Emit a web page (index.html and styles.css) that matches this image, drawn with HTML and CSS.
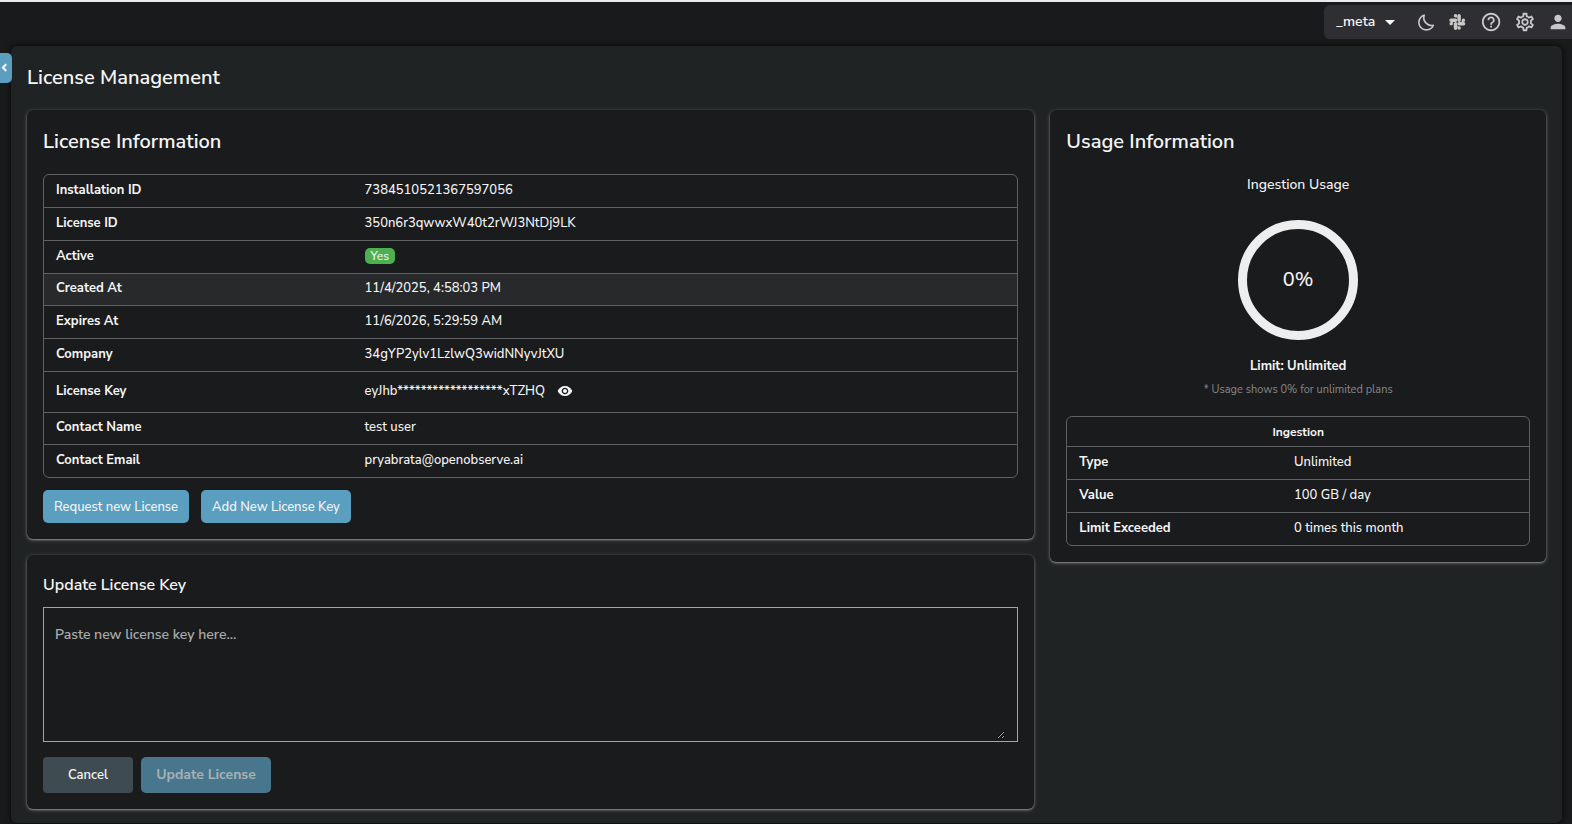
FILE: index.html
```
<!DOCTYPE html>
<html lang="en">
<head>
  <meta charset="UTF-8" />
  <meta name="viewport" content="width=device-width, initial-scale=1.0"/>
  <title>License Management</title>
  <link rel="stylesheet" href="styles.css">
</head>
<body>

  <header class="topbar">
    <div class="toolbar">
      <div class="org-select">
        <select aria-label="Organization">
          <option>_meta</option>
        </select>
      </div>
      <button class="icon-btn" aria-label="Toggle dark mode">
        <svg viewBox="0 0 24 24"><path d="M10 4.600a8.600 8.600 0 0 0 10 11A8.200 8.200 0 1 1 10 4.600z" fill="none" stroke="currentColor" stroke-width="1.8" stroke-linejoin="round"/></svg>
      </button>
      <button class="icon-btn" aria-label="Slack">
        <svg viewBox="2 0 24 24"><g fill="currentColor"><path d="M7.4 13.900a1.900 1.900 0 1 1-1.900-1.900h1.900zM8.300 13.900a1.900 1.900 0 0 1 3.800 0v4.900a1.900 1.900 0 1 1-3.800 0z"/><path d="M10.200 7.200a1.900 1.900 0 1 1 1.900-1.900v1.900zM10.200 8.100a1.900 1.900 0 0 1 0 3.800H5.300a1.900 1.900 0 1 1 0-3.800z"/><path d="M16.900 10a1.900 1.900 0 1 1 1.900 1.900h-1.900zM16 10a1.900 1.900 0 0 1-3.800 0V5.200a1.900 1.900 0 1 1 3.800 0z"/><path d="M14.100 16.700a1.900 1.900 0 1 1-1.900 1.900v-1.900zM14.100 15.800a1.900 1.900 0 0 1 0-3.800H19a1.900 1.900 0 1 1 0 3.800z"/></g></svg>
      </button>
      <button class="icon-btn" aria-label="Help">
        <svg viewBox="1 0 24 24"><path fill="currentColor" d="M11 18h2v-2h-2v2zm1-16C6.480 2 2 6.480 2 12s4.480 10 10 10 10-4.480 10-10S17.520 2 12 2zm0 18c-4.410 0-8-3.590-8-8s3.590-8 8-8 8 3.590 8 8-3.590 8-8 8zm0-14c-2.210 0-4 1.790-4 4h2c0-1.100.9-2 2-2s2 .9 2 2c0 2-3 1.750-3 5h2c0-2.250 3-2.500 3-5 0-2.210-1.790-4-4-4z"/></svg>
      </button>
      <button class="icon-btn" aria-label="Settings">
        <svg viewBox="0 0 24 24"><path fill="currentColor" d="M19.430 12.980c.04-.32.070-.64.070-.98s-.03-.66-.07-.98l2.110-1.650c.19-.15.240-.42.120-.64l-2-3.460c-.09-.16-.26-.25-.44-.25-.06 0-.12.010-.17.030l-2.490 1c-.52-.4-1.080-.73-1.690-.98l-.38-2.650C14.460 2.180 14.250 2 14 2h-4c-.25 0-.46.180-.49.420l-.38 2.650c-.61.250-1.170.590-1.690.980l-2.490-1c-.06-.02-.12-.03-.18-.03-.17 0-.34.090-.43.250l-2 3.460c-.13.220-.07.490.120.640l2.110 1.650c-.04.320-.07.650-.07.980s.03.660.070.980l-2.110 1.650c-.19.150-.24.420-.12.640l2 3.460c.09.160.260.250.440.250.06 0 .12-.01.170-.03l2.490-1c.52.400 1.080.730 1.690.980l.38 2.650c.03.240.240.420.490.420h4c.25 0 .46-.18.490-.42l.38-2.650c.61-.25 1.170-.59 1.690-.98l2.490 1c.06.020.120.030.180.030.17 0 .34-.09.430-.25l2-3.460c.12-.22.070-.49-.12-.64l-2.110-1.650zm-1.980-1.710c.04.310.050.520.050.730s-.02.430-.05.730l-.14 1.130.89.700 1.080.840-.7 1.210-1.270-.51-1.040-.42-.9.680c-.43.320-.84.560-1.250.730l-1.060.43-.16 1.130-.2 1.350h-1.400l-.19-1.350-.16-1.130-1.060-.43c-.43-.18-.83-.41-1.230-.71l-.91-.7-1.060.43-1.270.51-.7-1.210 1.080-.84.890-.7-.14-1.130c-.03-.31-.05-.54-.05-.74s.02-.43.050-.73l.14-1.130-.89-.7-1.080-.84.700-1.210 1.270.51 1.040.42.900-.68c.43-.32.840-.56 1.250-.73l1.060-.43.160-1.130.2-1.350h1.390l.19 1.350.16 1.130 1.060.43c.43.180.83.410 1.230.710l.91.700 1.060-.43 1.270-.51.700 1.210-1.070.85-.89.700.14 1.130zM12 8c-2.210 0-4 1.790-4 4s1.790 4 4 4 4-1.790 4-4-1.790-4-4-4zm0 6c-1.100 0-2-.9-2-2s.9-2 2-2 2 .9 2 2-.9 2-2 2z"/></svg>
      </button>
      <button class="icon-btn" aria-label="Profile">
        <svg viewBox="0 0 24 24"><path fill="currentColor" d="M12 12c2.210 0 4-1.790 4-4s-1.790-4-4-4-4 1.790-4 4 1.790 4 4 4zm0 2c-2.670 0-8 1.340-8 4v2h16v-2c0-2.660-5.330-4-8-4z"/></svg>
      </button>
    </div>
  </header>

  <button class="collapse-btn" aria-label="Collapse menu">
    <svg viewBox="0 0 24 24"><path d="M15 3l-8 8 8 8" fill="none" stroke="currentColor" stroke-width="5"/></svg>
  </button>

  <main class="page">
    <h1>License Management</h1>

    <div class="columns">
      <div class="column">
        <section class="card">
          <h2>License Information</h2>
          <table class="info-table license-table">
            <colgroup><col class="label-col"><col></colgroup>
            <tbody>
              <tr><th scope="row">Installation ID</th><td>7384510521367597056</td></tr>
              <tr><th scope="row">License ID</th><td>350n6r3qwwxW40t2rWJ3NtDj9LK</td></tr>
              <tr><th scope="row">Active</th><td><span class="badge">Yes</span></td></tr>
              <tr class="compact hovered"><th scope="row">Created At</th><td>11/4/2025, 4:58:03 PM</td></tr>
              <tr><th scope="row">Expires At</th><td>11/6/2026, 5:29:59 AM</td></tr>
              <tr><th scope="row">Company</th><td>34gYP2ylv1LzlwQ3widNNyvJtXU</td></tr>
              <tr class="key-row">
                <th scope="row">License Key</th>
                <td>
                  <div class="key">
                    <span>eyJhb******************xTZHQ</span>
                    <button class="eye-btn" aria-label="Show license key">
                      <svg viewBox="0 0 24 24"><path fill="currentColor" d="M12 4.500C7 4.500 2.730 7.610 1 12c1.730 4.390 6 7.500 11 7.500s9.270-3.110 11-7.500c-1.730-4.390-6-7.500-11-7.500zM12 17c-2.760 0-5-2.240-5-5s2.240-5 5-5 5 2.240 5 5-2.240 5-5 5zm0-8c-1.660 0-3 1.340-3 3s1.340 3 3 3 3-1.340 3-3-1.340-3-3-3z"/></svg>
                    </button>
                  </div>
                </td>
              </tr>
              <tr class="compact"><th scope="row">Contact Name</th><td>test user</td></tr>
              <tr class="compact"><th scope="row">Contact Email</th><td>pryabrata@openobserve.ai</td></tr>
            </tbody>
          </table>
          <div class="actions">
            <button class="btn">Request new License</button>
            <button class="btn">Add New License Key</button>
          </div>
        </section>

        <section class="card update-card">
          <label for="licenseKey">Update License Key</label>
          <div class="key-field">
            <textarea id="licenseKey" placeholder="Paste new license key here..."></textarea>
          </div>
          <div class="form-actions">
            <button class="btn btn-cancel">Cancel</button>
            <button class="btn btn-update" disabled>Update License</button>
          </div>
        </section>
      </div>

      <div class="column">
        <section class="card">
          <h2>Usage Information</h2>
          <div class="usage">
            <h3>Ingestion Usage</h3>
            <div class="ring">0%</div>
            <p class="limit">Limit: Unlimited</p>
            <p class="note">* Usage shows 0% for unlimited plans</p>
          </div>
          <table class="info-table usage-table">
            <colgroup><col class="label-col"><col></colgroup>
            <thead>
              <tr><th colspan="2">Ingestion</th></tr>
            </thead>
            <tbody>
              <tr><th scope="row">Type</th><td>Unlimited</td></tr>
              <tr><th scope="row">Value</th><td>100 GB / day</td></tr>
              <tr class="compact"><th scope="row">Limit Exceeded</th><td>0 times this month</td></tr>
            </tbody>
          </table>
        </section>
      </div>
    </div>
  </main>

</body>
</html>
```

FILE: styles.css
```
:root {
  --bg: #181a1b;
  --panel: #1f2324;
  --card: #1a1b1d;
  --toolbar: #2f2f33;
  --line: #5f6061;
  --text: #f5f5f5;
  --icon: #c8c8c9;
  --primary: #5a9fbf;
  --green: #4caf50;
}
* { box-sizing: border-box; }
body {
  margin: 0;
  min-height: 100vh;
  display: flex;
  flex-direction: column;
  border-top: 2px solid #e8eaec;
  background: var(--bg);
  color: var(--text);
  font-family: 'Nunito Sans', 'Open Sans', sans-serif;
  font-size: 13px;
  font-weight: 500;
  line-height: 20px;
}
h1, h2, h3, p { margin: 0; }
button, select, textarea {
  font: inherit;
  color: inherit;
}
button {
  padding: 0;
  border: none;
  background: none;
  cursor: pointer;
}
svg { display: block; }

.topbar {
  display: flex;
  justify-content: flex-end;
  padding: 3px 0 7px;
}
.toolbar {
  display: flex;
  align-items: center;
  gap: 11px;
  height: 34px;
  padding: 0 3px 0 12px;
  border-radius: 6px 0 0 6px;
  background: var(--toolbar);
}
.org-select {
  position: relative;
  width: 68px;
}
.org-select::after {
  content: "";
  position: absolute;
  top: 8px;
  right: 9px;
  border: 5px solid transparent;
  border-top-color: #fff;
  border-bottom: none;
  pointer-events: none;
}
.org-select select {
  display: block;
  width: 100%;
  padding: 0;
  border: none;
  background: transparent;
  appearance: none;
  font-size: 14px;
  font-weight: 600;
}
.icon-btn {
  width: 22px;
  height: 22px;
  color: var(--icon);
}

.collapse-btn {
  position: absolute;
  top: 53px;
  left: 0;
  display: flex;
  align-items: center;
  width: 12px;
  height: 30px;
  border-radius: 0 5px 5px 0;
  background: var(--primary);
}
.collapse-btn svg { width: 10px; }

.page {
  flex: 1;
  margin: 0 10px 1px 11px;
  padding: 16px 8px 14px;
  border-radius: 6px;
  background: var(--panel);
  box-shadow: 0 0 5px 1px rgba(0,0,0,0.6);
}
h1, h2 {
  font-size: 20px;
  line-height: 32px;
  font-weight: 600;
}
h1 { padding: 0 8px; }
.columns {
  display: grid;
  grid-template-columns: 2fr 1fr;
  align-items: start;
  margin-top: 16px;
}
.column {
  display: flex;
  flex-direction: column;
  gap: 16px;
  padding: 0 8px;
}
.card {
  padding: 16px;
  border-radius: 6px;
  background: var(--card);
  box-shadow: 0 1px 5px rgba(255,255,255,0.2), 0 1px 2px rgba(255,255,255,0.4);
}

.info-table {
  width: 100%;
  margin-top: 16px;
  border: 1px solid var(--line);
  border-radius: 6px;
  border-spacing: 0;
  table-layout: fixed;
  overflow: hidden;
}
.info-table th,
.info-table td {
  height: 33px;
  padding: 0 12px 3px;
  border-bottom: 1px solid var(--line);
  text-align: left;
}
.info-table th { font-weight: 700; }
.info-table .compact > * { height: 32px; }
.info-table tbody tr:last-child > * { border-bottom: none; }
.info-table .hovered { background: #28292b; }
.info-table .key-row > * { height: 41px; }
.license-table .label-col { width: 31.7%; }
.usage-table .label-col { width: 46.5%; }
.usage-table thead th {
  height: 30px;
  padding-bottom: 0;
  text-align: center;
  font-size: 12px;
}
.badge {
  display: inline-block;
  padding: 0 6px;
  border-radius: 5px;
  background: var(--green);
  font-size: 12px;
  line-height: 16px;
}
.key {
  display: flex;
  align-items: center;
  gap: 12px;
}
.eye-btn {
  width: 16px;
  height: 16px;
}

.actions {
  display: flex;
  gap: 12px;
  margin-top: 12px;
}
.btn {
  height: 33px;
  padding: 0 11px;
  border-radius: 5px;
  background: var(--primary);
}
.form-actions {
  display: flex;
  gap: 8px;
  margin-top: 15px;
}
.form-actions .btn { height: 36px; }
.btn-cancel {
  width: 90px;
  border-radius: 4px;
  background: #3e4b51;
  font-weight: 600;
}
.btn-update {
  width: 130px;
  background: #48778d;
  color: #a9b0b3;
  font-size: 14px;
  font-weight: 700;
}

.update-card label {
  display: block;
  font-size: 16px;
  font-weight: 600;
  line-height: 28px;
}
.key-field {
  margin-top: 8px;
  padding: 0 12px 2px 11px;
  border: 1px solid #a3a4a5;
}
.key-field textarea {
  display: block;
  width: 100%;
  height: 131px;
  padding: 17px 0;
  border: none;
  outline: none;
  background: transparent;
  color-scheme: dark;
  font-size: 14px;
  font-weight: 600;
  resize: vertical;
}
.key-field textarea::placeholder { color: #a9aaab; }

.usage {
  display: flex;
  flex-direction: column;
  align-items: center;
}
.usage h3 {
  margin-top: 16px;
  font-size: 14px;
  font-weight: 500;
  line-height: 22px;
}
.ring {
  display: flex;
  align-items: center;
  justify-content: center;
  width: 120px;
  height: 120px;
  margin: 24px 0 16px;
  border: 9px solid #eee;
  border-radius: 50%;
  font-size: 20px;
}
.limit { font-weight: 700; }
.note {
  margin-top: 4px;
  font-size: 11px;
  font-weight: 400;
  color: #868788;
}
```
